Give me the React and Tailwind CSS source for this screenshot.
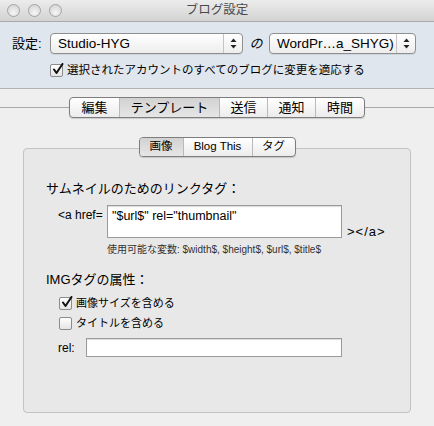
import React from 'react';

const FONT = { fontFamily: '"Liberation Sans", "Noto Sans CJK JP", sans-serif' };

function Light() {
  return (
    <span className="block w-[13px] h-[13px] rounded-full border border-[#a3a3a3] bg-[radial-gradient(circle_at_50%_70%,#f6f6f6,#cfcfcf)]" />
  );
}

function Arrows() {
  return (
    <svg width="7" height="11" viewBox="0 0 7 11">
      <path d="M3.5 0.5 L6.5 4 L0.5 4 Z" fill="#222" />
      <path d="M3.5 10.5 L6.5 7 L0.5 7 Z" fill="#222" />
    </svg>
  );
}

function Popup({ label, width }) {
  return (
    <div
      className="flex h-[21px] items-stretch rounded-[4px] border border-[#8f8f8f] bg-gradient-to-b from-white to-[#ededed] shadow-[0_1px_0_rgba(0,0,0,0.08)]"
      style={{ width }}
    >
      <span className="flex-1 pl-[7px] text-[13.5px] leading-[19px] text-black">{label}</span>
      <span className="flex w-[19px] items-center justify-center border-l border-[#c4c4c4]">
        <Arrows />
      </span>
    </div>
  );
}

function Check({ on }) {
  return (
    <span className="relative flex h-[13px] w-[13px] shrink-0 items-center justify-center rounded-[2px] border border-[#8c8c8c] bg-gradient-to-b from-white to-[#e4e4e4]">
      {on && (
        <svg width="12" height="12" viewBox="0 0 12 12" className="absolute -top-[2px] left-[1px]">
          <path d="M2 6.5 L4.5 10 L10.5 1" stroke="#111" strokeWidth="2" fill="none" strokeLinecap="round" strokeLinejoin="round" />
        </svg>
      )}
    </span>
  );
}

function Segments({ items, active, widths, h = 21, text = 'text-[13px]' }) {
  return (
    <div className="relative z-10 flex rounded-[4px] border border-[#7d7d7d] bg-gradient-to-b from-white to-[#ececec] shadow-[0_1px_1px_rgba(0,0,0,0.15)] overflow-hidden" style={{ height: h }}>
      {items.map((it, i) => (
        <span
          key={it}
          className={`flex items-center justify-center ${text} text-black ${i > 0 ? 'border-l border-[#b9b9b9]' : ''} ${i === active ? 'bg-gradient-to-b from-[#d2d2d2] to-[#e6e6e6]' : ''}`}
          style={{ width: widths[i] }}
        >
          {it}
        </span>
      ))}
    </div>
  );
}

export default function App() {
  return (
    <div className="w-[434px] h-[426px] overflow-hidden bg-[#efefef] text-black" style={FONT}>
      {/* title bar */}
      <div className="grid h-[22px] grid-cols-[1fr_auto_1fr] items-center border-b border-[#a9a9a9] bg-gradient-to-b from-[#ececec] to-[#d3d3d3]">
        <div className="flex gap-[8px] pl-[7px]">
          <Light />
          <Light />
          <Light />
        </div>
        <span className="text-[12.5px] text-[#4a4a4a]">ブログ設定</span>
        <div />
      </div>

      {/* account panel */}
      <div className="h-[67px] border-b border-[#b3b3b3] bg-[#dfe6ee] pt-[11px]">
        <div className="flex items-center">
          <span className="w-[50px] pl-[12px] text-[13px]">設定:</span>
          <Popup label="Studio-HYG" width={193} />
          <span className="w-[26px] text-center text-[13px] italic">の</span>
          <Popup label="WordPr…a_SHYG)" width={147} />
        </div>
        <div className="mt-[8px] flex items-center gap-[4px] pl-[50px]">
          <Check on />
          <span className="text-[11.5px]">選択されたアカウントのすべてのブログに変更を適応する</span>
        </div>
      </div>

      {/* main tabs */}
      <div className="mt-[8px] flex items-center">
        <div className="h-px flex-1 bg-[#a8a8a8]" />
        <Segments
          items={['編集', 'テンプレート', '送信', '通知', '時間']}
          active={1}
          widths={[49, 100, 48, 48, 49]}
        />
        <div className="h-px flex-1 bg-[#a8a8a8]" />
      </div>

      {/* group box */}
      <div className="mx-[23px] mt-[19px]">
        <div className="-mb-[9px] flex justify-center">
          <Segments
            items={['画像', 'Blog This', 'タグ']}
            active={0}
            widths={[43, 69, 43]}
            h={20}
            text="text-[11.5px]"
          />
        </div>
        <div className="h-[265px] rounded-[4px] border border-[#c3c3c3] bg-[#e8e8e8] pl-[22px] pt-[32px]">
          <div className="text-[13px] leading-[16px]">サムネイルのためのリンクタグ：</div>

          <div className="mt-[8px] flex items-end">
            <span className="mb-auto mt-[1px] w-[61px] pl-[12px] text-[12px] whitespace-nowrap">&lt;a href=</span>
            <div className="h-[33px] w-[235px] border border-[#9b9b9b] bg-white px-[4px] pt-[1px] text-[12.5px] shadow-[inset_0_1px_1px_rgba(0,0,0,0.15)]">
              "$url$" rel="thumbnail"
            </div>
            <span className="-mb-[3px] pl-[5px] text-[13px] tracking-[1px]">&gt;&lt;/a&gt;</span>
          </div>

          <div className="mt-[6px] pl-[61px] text-[10px] leading-[12px] text-[#333]">使用可能な変数: $width$, $height$, $url$, $title$</div>

          <div className="mt-[16px] text-[13px] leading-[16px]">IMGタグの属性：</div>

          <div className="mt-[7px] flex flex-col gap-[4px] pl-[13px]">
            <div className="flex h-[16px] items-center gap-[4px]">
              <Check on />
              <span className="text-[11px]">画像サイズを含める</span>
            </div>
            <div className="flex h-[16px] items-center gap-[4px]">
              <Check />
              <span className="text-[11px]">タイトルを含める</span>
            </div>
          </div>

          <div className="mt-[7px] flex items-center">
            <span className="w-[40px] pl-[12px] text-[12px]">rel:</span>
            <div className="h-[19px] w-[256px] border border-[#9b9b9b] bg-white shadow-[inset_0_1px_1px_rgba(0,0,0,0.15)]" />
          </div>
        </div>
      </div>
    </div>
  );
}
